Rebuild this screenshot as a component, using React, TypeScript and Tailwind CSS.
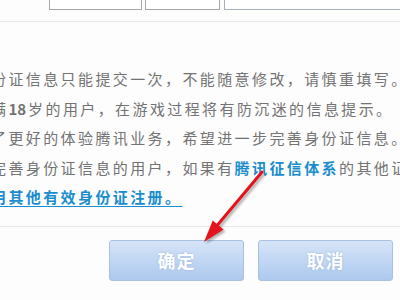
import React from "react";

export default function App() {
  const gray = "text-[#737373]";
  return (
    <div
      className="relative w-[400px] h-[300px] overflow-hidden bg-[#fdfdfd] flex flex-col"
      style={{ fontFamily: '"Noto Sans CJK SC", "Noto Sans", sans-serif' }}
    >
      <div className="flex mt-[-21px] pl-[49px] shrink-0">
        <div className="shrink-0 w-[93px] h-[31px] border border-[#a6a6a6] bg-white" />
        <div className="shrink-0 w-[75px] h-[31px] border border-[#a6a6a6] bg-white ml-[3px]" />
        <div className="shrink-0 w-[200px] h-[31px] border border-[#a7afc2] bg-white ml-[4px]" />
      </div>
      <div className="mt-[11px] h-px bg-[#e8e8e8] shrink-0" />
      <div className="mt-[42px] overflow-hidden shrink-0">
        <div className={`ml-[-9px] whitespace-nowrap text-[15px] leading-[29.5px] tracking-[2.4px] ${gray}`}>
          <div>份证信息只能提交一次，不能随意修改，请慎重填写。</div>
          <div>
            满<span className="font-bold tracking-normal mr-[2px]">18</span>岁的用户，在游戏过程将有防沉迷的信息提示。
          </div>
          <div>了更好的体验腾讯业务，希望进一步完善身份证信息。</div>
          <div>
            完善身份证信息的用户，如果有
            <span className="font-bold text-[#1a8dce]">腾讯征信体系</span>
            的其他证件
          </div>
          <div>
            <span className="font-bold text-[#1a8dce] underline underline-offset-[3px]">用其他有效身份证注册。</span>
          </div>
        </div>
      </div>
      <div className="mt-[14px] h-px bg-[#e8e8e8] shrink-0" />
      <div className="mt-[13px] flex justify-end gap-[14px] pr-[7px] shrink-0">
        <button className="w-[135px] h-[41px] rounded-[3px] border border-[#a8c0e2] bg-gradient-to-b from-[#d6e4f7] to-[#adc9ef] text-white font-bold text-[18px] tracking-[1px] [text-shadow:0_0_2px_rgba(120,150,200,0.6)]">
          确定
        </button>
        <button className="w-[135px] h-[41px] rounded-[3px] border border-[#a8c0e2] bg-gradient-to-b from-[#d6e4f7] to-[#adc9ef] text-white font-bold text-[18px] tracking-[1px] [text-shadow:0_0_2px_rgba(120,150,200,0.6)]">
          取消
        </button>
      </div>
      <svg className="absolute left-0 top-0 pointer-events-none" width="400" height="300" viewBox="0 0 400 300">
        <defs>
          <filter id="sh" x="-20%" y="-20%" width="140%" height="140%">
            <feGaussianBlur stdDeviation="1.2" />
          </filter>
        </defs>
        <g transform="translate(2,2)" opacity="0.45" filter="url(#sh)">
          <line x1="262" y1="172" x2="215" y2="228" stroke="#555" strokeWidth="3" />
          <polygon points="204,242 223.5,229.6 212.7,220.6" fill="#555" />
        </g>
        <line x1="262" y1="172" x2="215" y2="228" stroke="#e3141b" strokeWidth="3" strokeLinecap="round" />
        <polygon points="204,242 223.5,229.6 212.7,220.6" fill="#e3141b" />
      </svg>
    </div>
  );
}
